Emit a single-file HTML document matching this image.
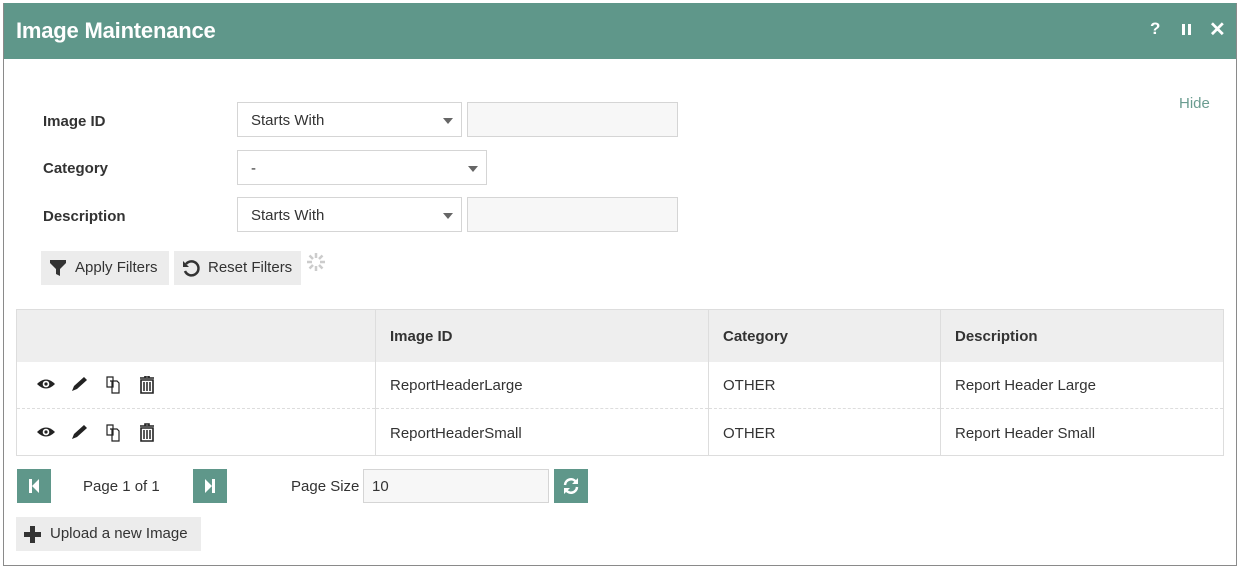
<!DOCTYPE html>
<html><head><style>
*{box-sizing:border-box;margin:0;padding:0}
body{width:1239px;height:568px;background:#fff;font-family:"Liberation Sans",sans-serif;font-size:15px;color:#333;position:relative;overflow:hidden}
.a{position:absolute}
.win{left:3px;top:3px;width:1234px;height:563px;border:1px solid #8a8a8a;border-top:none}
.hdr{left:3px;top:3px;width:1234px;height:56px;background:#5f978a}
.lbl{font-weight:bold;font-size:15px;color:#333}
.sel{border:1px solid #d5d5d5;background:#fff;height:35px;padding:9px 13px;font-size:15px}
.sel:after{content:"";position:absolute;right:8px;top:15px;border-left:5px solid transparent;border-right:5px solid transparent;border-top:6px solid #666}
.inp{border:1px solid #d5d5d5;background:#f7f7f7;height:35px}
.btn{background:#ececec;height:34px;font-size:15px;padding-top:8px}
.g{background:#5f978a}
td,th{border-right:1px solid #ddd;text-align:left;padding-left:14px;padding-top:2px}
</style></head><body>
<div class="a hdr"></div>
<div class="a win"></div>
<div class="a" style="left:16px;top:18px;color:#fff;font-size:22px;font-weight:bold;letter-spacing:-0.2px">Image Maintenance</div>
<div class="a" style="left:1150px;top:19px;color:#fff;font-size:17px;font-weight:bold">?</div>
<div class="a" style="left:1182px;top:24px;width:3px;height:11px;background:#fff"></div>
<div class="a" style="left:1188px;top:24px;width:3px;height:11px;background:#fff"></div>
<div class="a" style="left:1209px;top:17px;color:#fff;font-size:20px;font-weight:bold">✕</div>
<div class="a" style="left:1179px;top:95px;color:#6a9c90;font-size:15px">Hide</div>

<div class="a lbl" style="left:43px;top:113px">Image ID</div>
<div class="a sel" style="left:237px;top:102px;width:225px">Starts With</div>
<div class="a inp" style="left:467px;top:102px;width:211px"></div>
<div class="a lbl" style="left:43px;top:160px">Category</div>
<div class="a sel" style="left:237px;top:150px;width:250px">-</div>
<div class="a lbl" style="left:43px;top:208px">Description</div>
<div class="a sel" style="left:237px;top:197px;width:225px">Starts With</div>
<div class="a inp" style="left:467px;top:197px;width:211px"></div>

<div class="a btn" style="left:41px;top:251px;width:128px;padding-left:34px">Apply Filters</div>
<svg class="a" style="left:49px;top:259px" width="18" height="18" viewBox="0 0 18 18"><path d="M1 1H17V4L11 10V17L7 15V10L1 4Z" fill="#333"/></svg>
<div class="a btn" style="left:174px;top:251px;width:127px;padding-left:34px">Reset Filters</div>
<svg class="a" style="left:181px;top:258px" width="20" height="20" viewBox="0 0 20 20"><path d="M5 6A7 7 0 1 1 4 13" stroke="#333" stroke-width="2.5" fill="none"/><path d="M2 3V9H8Z" fill="#333"/></svg>
<svg class="a" style="left:305px;top:251px" width="22" height="22" viewBox="0 0 22 22" stroke="#ccc" stroke-width="2.5"><path d="M11 2V7M11 15V20M2 11H7M15 11H20M4.5 4.5L8 8M14 14L17.5 17.5M17.5 4.5L14 8M8 14L4.5 17.5"/></svg>

<table class="a" style="left:16px;top:309px;width:1208px;border-collapse:collapse;border:1px solid #ddd;font-size:15px">
<tr style="background:#eee;height:52px"><th style="width:359px"></th><th style="width:333px;font-weight:bold">Image ID</th><th style="width:232px">Category</th><th>Description</th></tr>
<tr style="height:47px;border-bottom:1px dashed #ddd"><td></td><td>ReportHeaderLarge</td><td>OTHER</td><td>Report Header Large</td></tr>
<tr style="height:47px;border-bottom:1px solid #ddd"><td></td><td>ReportHeaderSmall</td><td>OTHER</td><td>Report Header Small</td></tr>
</table>
<svg class="a" style="left:37px;top:376px" width="120" height="66" viewBox="0 0 120 66">
<g id="r"><path d="M0 8Q9 -1 18 8Q9 17 0 8Z" fill="#222"/><circle cx="9" cy="8" r="3.3" fill="#fff"/><circle cx="9" cy="8" r="1.6" fill="#222"/>
<path d="M35 15L37 10L47 1L50 4L40 13Z" fill="#222"/>
<path d="M70 1H76V11H70Z M73 5H80L82 7V17H75V5" fill="none" stroke="#222" stroke-width="1.2"/>
<path d="M103 2H117M108 2V0H112V2M104 4H116V17H104Z" fill="none" stroke="#222" stroke-width="1.6"/><path d="M107 6V15M110 6V15M113 6V15" stroke="#222" stroke-width="1.5"/></g>
<use href="#r" y="48"/>
</svg>

<div class="a g" style="left:17px;top:469px;width:34px;height:34px"></div>
<svg class="a" style="left:17px;top:469px" width="34" height="34"><path d="M12 10H15V24H12ZM15 17L22 10V24Z" fill="#fff"/></svg>
<div class="a" style="left:83px;top:478px">Page 1 of 1</div>
<div class="a g" style="left:193px;top:469px;width:34px;height:34px"></div>
<svg class="a" style="left:193px;top:469px" width="34" height="34"><path d="M19 10H22V24H19ZM19 17L12 10V24Z" fill="#fff"/></svg>
<div class="a" style="left:291px;top:478px">Page Size</div>
<div class="a inp" style="left:363px;top:469px;width:186px;height:34px;padding:8px 8px">10</div>
<div class="a g" style="left:554px;top:469px;width:34px;height:34px"></div>
<svg class="a" style="left:554px;top:469px" width="34" height="34"><path d="M11 16A6 6 0 0 1 22 13M23 18A6 6 0 0 1 12 21" stroke="#fff" stroke-width="2.5" fill="none"/><path d="M24 9V15H18Z M10 25V19H16Z" fill="#fff"/></svg>

<div class="a btn" style="left:16px;top:517px;width:185px;padding-left:34px">Upload a new Image</div>
<svg class="a" style="left:24px;top:526px" width="17" height="17"><path d="M6 0H11V6H17V11H11V17H6V11H0V6H6Z" fill="#333"/></svg>
</body></html>
